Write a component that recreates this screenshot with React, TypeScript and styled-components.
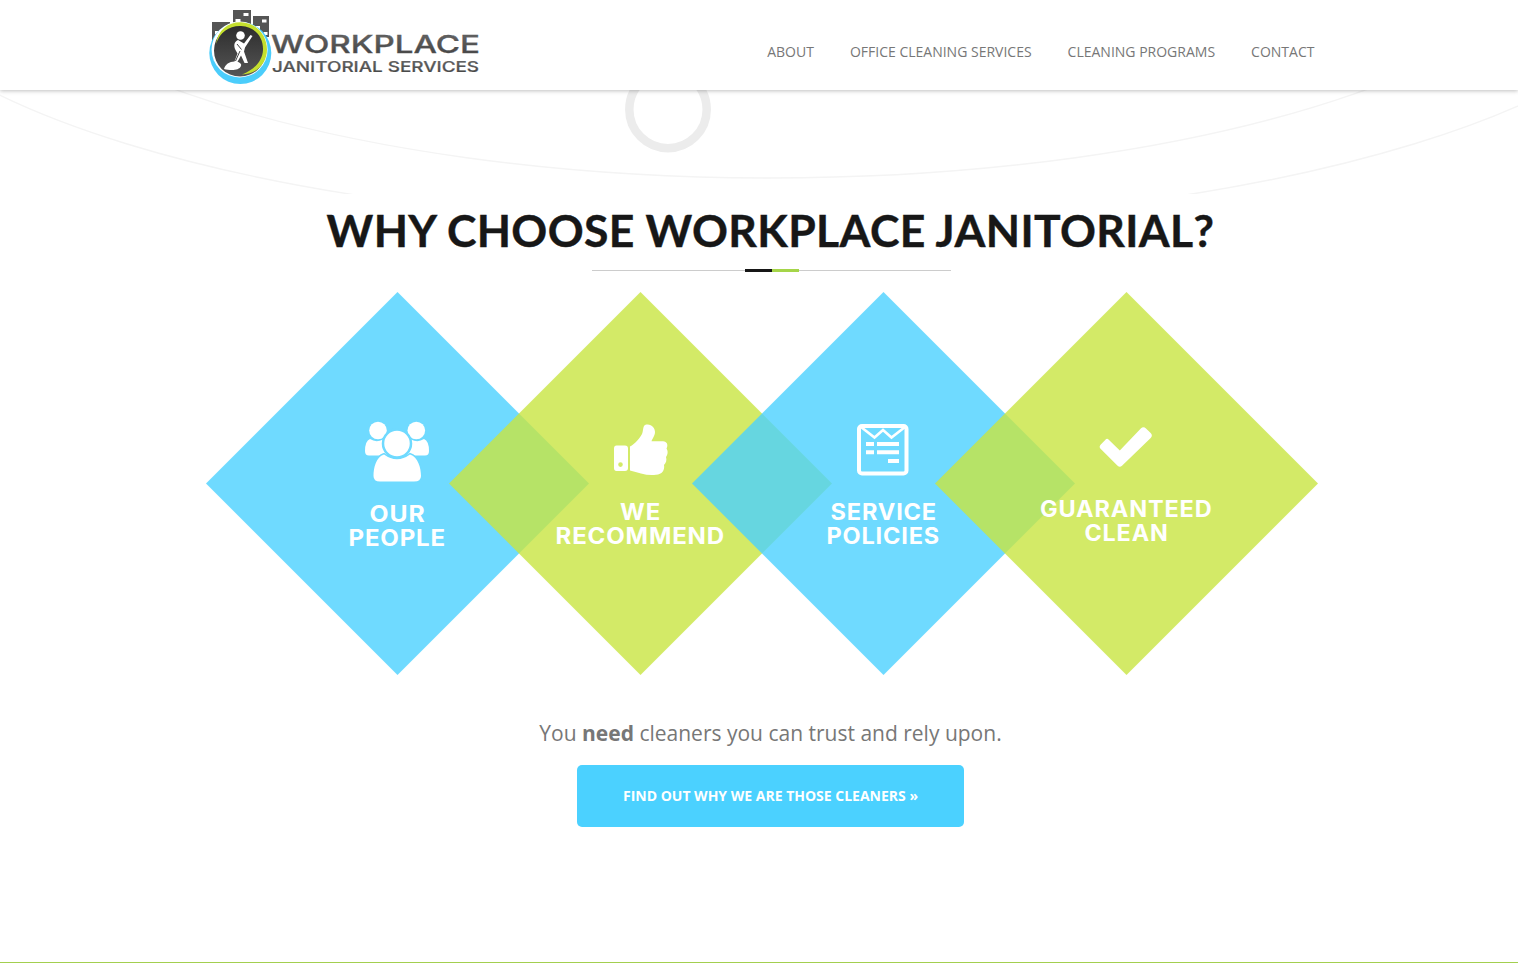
import React from "react";
import styled, { createGlobalStyle } from "styled-components";

const GlobalStyle = createGlobalStyle`
  * { box-sizing: border-box; }
  body { margin: 0; background: #fff; font-family: "Open Sans", sans-serif; color: #777; }
  #root { height: 963px; overflow: hidden; }
`;

const Page = styled.div`
  display: flex;
  flex-direction: column;
  height: 963px;
`;

const Header = styled.header`
  position: relative;
  z-index: 2;
  display: flex;
  flex: none;
  justify-content: space-between;
  height: 90px;
  padding: 0 203.6px 0 206px;
  background: #fff;
  box-shadow: 0 1px 4px rgba(0, 0, 0, 0.25);
`;

const LogoSvg = styled.svg`
  display: block;
  width: 280px;
  height: 90px;
`;

const LogoText = styled.text<{ $size: number; $weight: number }>`
  font-family: "Inter", sans-serif;
  font-size: ${(p) => p.$size}px;
  font-weight: ${(p) => p.$weight};
`;

const Nav = styled.nav`
  display: flex;
  gap: 36px;
  padding-top: 42px;
`;

const NavLink = styled.a`
  font-size: 14px;
  line-height: 20px;
  color: #777;
  white-space: nowrap;
  text-transform: uppercase;
`;

const BannerSvg = styled.svg`
  display: block;
  flex: none;
  width: 1518px;
  height: 104px;
`;

const Section = styled.main`
  display: flex;
  flex: 1;
  flex-direction: column;
  align-items: center;
  padding-left: 23px;
  border-bottom: 1px solid #a3cf4f;
`;

const Title = styled.h1`
  margin: 9px 0 0;
  font-family: "Lato", sans-serif;
  font-size: 44.5px;
  font-weight: 700;
  line-height: 54px;
  letter-spacing: 0.36px;
  color: #171717;
  -webkit-text-stroke: 0.4px #171717;
  white-space: nowrap;
  text-transform: uppercase;
`;

const Divider = styled.div`
  display: flex;
  align-items: center;
  width: 359px;
  height: 3px;
  margin: 12px 0 0 2px;
`;

const Rule = styled.span`
  flex: 1;
  height: 1px;
  background: #ccc;
`;

const Accent = styled.span<{ $color: string }>`
  width: 27px;
  height: 3px;
  background: ${(p) => p.$color};
`;

const Diamonds = styled.div`
  display: flex;
  width: 1112px;
  height: 383px;
  margin: 20px 17px 0 0;
`;

const DiamondSvg = styled.svg`
  display: block;
  flex: none;
  width: 383px;
  height: 383px;
  & + & { margin-left: -140px; }
`;

const Caption = styled.text`
  font-family: "Inter", sans-serif;
  font-size: 22.4px;
  font-weight: 700;
  letter-spacing: 0.8px;
  fill: #fff;
`;

const Lead = styled.p`
  margin: 43px 0 0;
  font-size: 21px;
  line-height: 30px;
  white-space: nowrap;
`;

const Button = styled.a`
  display: flex;
  align-items: center;
  justify-content: center;
  width: 387px;
  height: 62px;
  margin-top: 17px;
  padding-bottom: 2px;
  border-radius: 5px;
  background: #4bd1ff;
  color: #fff;
  font-size: 14px;
  font-weight: 700;
  white-space: nowrap;
  text-transform: uppercase;
`;

type Line = { text: string; x: number; y: number; width: number };
type DiamondProps = { color: string; lines: Line[]; children: React.ReactNode };

function Diamond({ color, lines, children }: DiamondProps) {
  return (
    <DiamondSvg viewBox="0 0 383 383">
      <path d="M191.5 0 383 191.5 191.5 383 0 191.5Z" fill={color} fillOpacity={0.8} />
      {children}
      {lines.map((l) => (
        <Caption key={l.text} x={l.x} y={l.y} textLength={l.width} lengthAdjust="spacingAndGlyphs">
          {l.text}
        </Caption>
      ))}
    </DiamondSvg>
  );
}

const BLUE = "#4bd1ff";
const GREEN = "#c8e541";

function Logo() {
  return (
    <LogoSvg viewBox="206 0 280 90">
      <defs>
        <linearGradient id="ink" x1="0" y1="0" x2="0" y2="1">
          <stop offset="0" stopColor="#6a6a6a" />
          <stop offset="1" stopColor="#3f3f3f" />
        </linearGradient>
        <linearGradient id="disc" x1="0" y1="0" x2="0" y2="1">
          <stop offset="0" stopColor="#2c2c2c" />
          <stop offset="1" stopColor="#555" />
        </linearGradient>
      </defs>
      <path d="M212 22h18v34h-18zM233 10h18v24h-18zM253 16h16v21h-16z" fill="#555" />
      <path d="M222 31h5v3.500h-5zM215 31h4v3.500h-4zM243.500 13h5v3h-5zM235.500 19h5v3h-5zM262 19.500h4.500v3h-4.500zM256 26h4v3h-4zM263.500 32h4v3h-4z" fill="#fff" />
      <circle cx="240.300" cy="53" r="31" fill="#4bcdfb" />
      <circle cx="239.600" cy="49.500" r="28" fill="#fff" />
      <circle cx="240" cy="50.500" r="26" fill="url(#disc)" />
      <path d="M216 44C218 30 228 22 241 22.300C256 22.500 267 35 267 49.500C267 63 257 74 242 74.500C254 70 262.500 61 263 50C263.500 36.500 254 26.300 241 26C229 25.600 220 32 216 44Z" fill="#c4df2e" />
      <circle cx="240.500" cy="35.500" r="4.300" fill="#fff" />
      <path d="M238 40C234 41.500 233.500 46 235.500 50L237.500 53.500L234.500 61.500C229.500 61.500 225 64.500 224 69C230 70.500 239 71 241 66C242 63.500 239 62.500 237.500 61.800L241 55.500L244.500 63H248L244 51.500L245 47.500L252.500 36L250.500 35L244 43.500Z" fill="#fff" />
      <path d="M237 44 241.500 49.500M240 51 235.500 61" stroke="#444" strokeWidth="1" />
      <LogoText $size={24.5} $weight={500} x={271} y={52.8} textLength={209} lengthAdjust="spacingAndGlyphs" fill="url(#ink)" stroke="#555" strokeWidth="0.3">
        WORKPLACE
      </LogoText>
      <LogoText $size={14.8} $weight={500} x={272} y={72.3} textLength={207} lengthAdjust="spacingAndGlyphs" fill="url(#ink)" stroke="#555" strokeWidth="0.2">
        JANITORIAL SERVICES
      </LogoText>
    </LogoSvg>
  );
}

export default function App() {
  return (
    <Page>
      <GlobalStyle />
      <Header>
        <Logo />
        <Nav>
          <NavLink>About</NavLink>
          <NavLink>Office Cleaning Services</NavLink>
          <NavLink>Cleaning Programs</NavLink>
          <NavLink>Contact</NavLink>
        </Nav>
      </Header>
      <BannerSvg viewBox="0 90 1518 104" fill="none">
        <ellipse cx="771" cy="-111" rx="827" ry="289" stroke="#f4f4f4" strokeWidth="1.400" />
        <ellipse cx="770.500" cy="-54" rx="911" ry="279.700" stroke="#f4f4f4" strokeWidth="1.400" />
        <circle cx="668" cy="109.500" r="38.700" stroke="#ececec" strokeWidth="8.500" />
      </BannerSvg>
      <Section>
        <Title>Why Choose Workplace Janitorial?</Title>
        <Divider>
          <Rule />
          <Accent $color="#171717" />
          <Accent $color="#a5d549" />
          <Rule />
        </Divider>
        <Diamonds>
          <Diamond
            color={BLUE}
            lines={[
              { text: "OUR", x: 163.5, y: 229.5, width: 56 },
              { text: "PEOPLE", x: 142.5, y: 253.5, width: 97.5 },
            ]}
          >
            <g fill="#fff">
              <circle cx="172" cy="138.500" r="8.800" />
              <circle cx="210.300" cy="138.500" r="8.800" />
              <path d="M164 147Q170 151 177 147.500Q176.500 158 182 163.500H163Q159 163.500 159 159Q159 149 164 147Z" />
              <path d="M218 147Q212 151 205 147.500Q205.500 158 200 163.500H219Q223 163.500 223 159Q223 149 218 147Z" />
              <path d="M178 162.500Q191 172 204 162.500C212 165 215 176 215 184Q215 189.500 208 189.500H174Q167.500 189.500 167.500 184C167.500 176 170 165 178 162.500Z" stroke="#6fdaff" strokeWidth="3" paintOrder="stroke" />
              <circle cx="191" cy="151.500" r="14" stroke="#6fdaff" strokeWidth="2.500" />
            </g>
          </Diamond>
          <Diamond
            color={GREEN}
            lines={[
              { text: "WE", x: 171, y: 227.5, width: 41 },
              { text: "RECOMMEND", x: 106.5, y: 251.5, width: 169.5 },
            ]}
          >
            <path
              d="M167.500 153.500H176Q179 153.500 179 156.500V176Q179 179 176 179H167.500Q165 179 165 176V156.500Q165 153.500 167.500 153.500ZM171.500 170.300A2.300 2.300 0 1 0 171.500 174.900A2.300 2.300 0 1 0 171.500 170.300Z"
              fill="#fff"
              fillRule="evenodd"
            />
            <path d="M181 154.500C186 152 191 146 193 142C194.500 139 193.500 135 196 133C202 131 206 136 206 140C206 144 203 147 202.500 149.300H214C218 149.500 219.500 153 217.500 156.500C219.500 159.500 218.500 163 217 165C218 168 217 171 215 173C216 178 213 182.500 207 182.800C198 184 190 181 181 178.500Z" fill="#fff" />
          </Diamond>
          <Diamond
            color={BLUE}
            lines={[
              { text: "SERVICE", x: 138.5, y: 227.5, width: 106.5 },
              { text: "POLICIES", x: 134.5, y: 251.5, width: 113.5 },
            ]}
          >
            <rect x="167" y="134" width="47.500" height="47.500" rx="3" fill="none" stroke="#fff" strokeWidth="4" />
            <path d="M169 135 182.500 145.500 191 138 199.500 145.500 213 135" fill="none" stroke="#fff" strokeWidth="2.600" />
            <path d="M174 150h8v4h-8zM185 150h22v4h-22zM174 158.300h8v4h-8zM185 158.300h22v4h-22zM196 167h11v4h-11z" fill="#fff" />
          </Diamond>
          <Diamond
            color={GREEN}
            lines={[
              { text: "GUARANTEED", x: 105, y: 224.5, width: 172.5 },
              { text: "CLEAN", x: 149.5, y: 248.5, width: 84 },
            ]}
          >
            <path d="M173.500 147.500 184.800 158.500 205.800 136.500Q208.500 134 211 136.500L215.700 141Q218 143.500 215.700 146L187 173.800Q184.800 175.800 182.600 173.800L165.800 157Q163.500 154.800 165.800 152.500L170.200 148Q172 146 173.500 147.500Z" fill="#fff" />
          </Diamond>
        </Diamonds>
        <Lead>
          You <strong>need</strong> cleaners you can trust and rely upon.
        </Lead>
        <Button>Find out why we are those cleaners »</Button>
      </Section>
    </Page>
  );
}
